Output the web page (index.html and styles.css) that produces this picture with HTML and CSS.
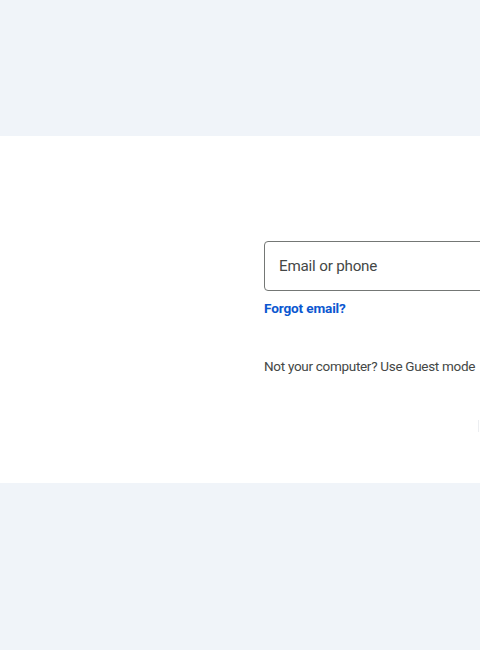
FILE: index.html
```html
<!DOCTYPE html>
<html lang="en">
<head>
    <meta charset="UTF-8">
    <meta name="viewport" content="width=device-width, initial-scale=1.0">
    <title>Sign in</title>
    <link rel="stylesheet" href="styles.css">
</head>
<body>
    <div class="top-space"></div>
    <main class="card">
        <div class="card-left"></div>
        <div class="card-right">
            <div class="field">
                <input type="text" class="field-input" placeholder="Email or phone">
            </div>
            <a class="forgot-link" href="#">Forgot email?</a>
            <p class="guest-note">Not your computer? Use Guest mode</p>
            <div class="actions">
                <span class="next-edge"></span>
            </div>
        </div>
    </main>
    <div class="bottom-space"></div>
</body>
</html>
```

FILE: styles.css
```css
html, body {
    margin: 0;
    padding: 0;
    overflow: hidden;
}
body {
    font-family: Roboto, 'Noto Sans', Arial, sans-serif;
    background: #f0f4f9;
    color: #1f1f1f;
    width: 480px;
    height: 650px;
}
.top-space {
    height: 136px;
}
.card {
    background: #fff;
    height: 347px;
    display: flex;
    overflow: hidden;
}
.card-left {
    flex: 0 0 264px;
}
.card-right {
    flex: 0 0 400px;
    padding-top: 105px;
    box-sizing: border-box;
}
.field {
    width: 400px;
}
.field-input {
    box-sizing: border-box;
    width: 100%;
    height: 50px;
    border: 1px solid #747775;
    border-radius: 4px;
    padding: 0 14px;
    font-family: inherit;
    font-size: 15.2px;
    letter-spacing: -0.2px;
    color: #1f1f1f;
    outline: none;
}
.field-input::placeholder {
    color: #444746;
}
.forgot-link {
    display: inline-block;
    margin-top: 7px;
    font-size: 13.6px;
    line-height: 20px;
    font-weight: bold;
    color: #0b57d0;
    text-decoration: none;
    letter-spacing: -0.15px;
}
.guest-note {
    margin: 38px 0 0 0;
    font-size: 13.5px;
    line-height: 20px;
    letter-spacing: -0.3px;
    color: #444746;
    white-space: nowrap;
}
.actions {
    margin-top: 44px;
    position: relative;
    height: 20px;
}
.next-edge {
    position: absolute;
    left: 214px;
    top: 0;
    width: 1px;
    height: 12px;
    background: #eceef1;
}
```
